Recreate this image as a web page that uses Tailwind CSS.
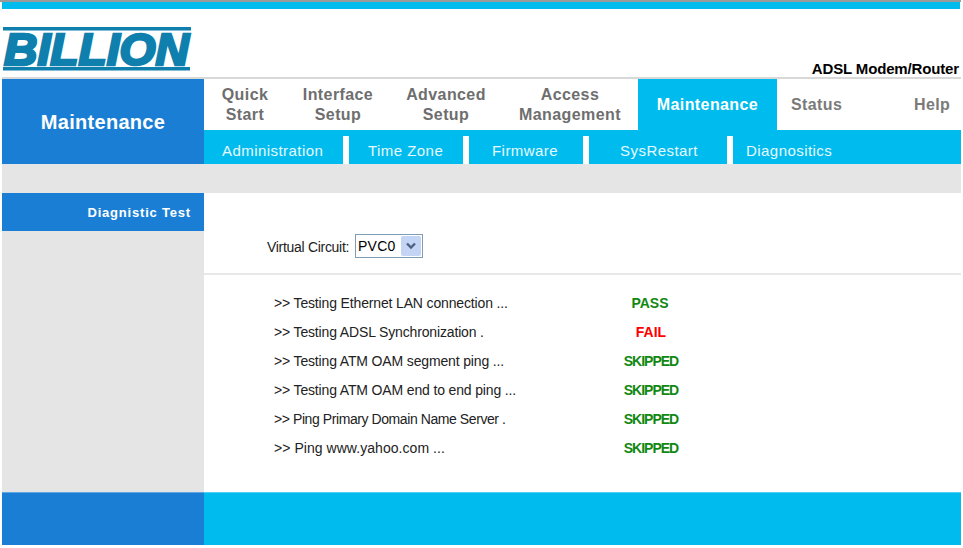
<!DOCTYPE html>
<html lang="en">
<head>
    <meta charset="UTF-8">
    <title>ADSL Modem/Router</title>
    <script src="https://cdn.jsdelivr.net/npm/@tailwindcss/browser@4"></script>
</head>
<body class="bg-white overflow-hidden font-['Liberation_Sans',Arial,sans-serif]">
    <div class="w-[963px] h-[548px] flex flex-col">
        <div class="h-[2px] mr-[2px] bg-[#9a9a9a]"></div>
        <div class="h-[7px] ml-[2px] mr-[3px] bg-[#00bbed]"></div>

        <!-- Logo row -->
        <div class="h-[70px] flex justify-between items-end border-b-2 border-[#d8d8d8] ml-[2px] mr-[2px]">
            <svg width="190" height="52" viewBox="0 0 190 52" class="mb-[1px]">
                <rect x="1" y="3" width="188" height="3.5" fill="#0f7fae"/>
                <rect x="1" y="43" width="187" height="3.5" fill="#0f7fae"/>
                <text x="2" y="41" textLength="185" lengthAdjust="spacingAndGlyphs" font-family="Liberation Sans" font-weight="700" font-style="italic" font-size="44" stroke="#0f7fae" stroke-width="2.6" fill="#0f7fae">BILLION</text>
            </svg>
            <span class="text-[15px] font-bold text-black leading-none mb-[1px] mr-[2px] tracking-[-0.15px]">ADSL Modem/Router</span>
        </div>

        <!-- Header -->
        <div class="flex h-[85px] ml-[2px] mr-[2px]">
            <div class="w-[202px] bg-[#1a7fd4] flex items-center justify-center text-white text-[20px] font-bold tracking-[0.3px]">Maintenance</div>
            <div class="flex-1 flex flex-col">
                <nav class="h-[51px] flex text-[16px] font-bold text-[#6e6e6e] leading-[20px] tracking-[0.4px] text-center">
                    <a class="w-[82px] pt-[6px]">Quick<br>Start</a>
                    <a class="w-[104px] pt-[6px]">Interface<br>Setup</a>
                    <a class="w-[112px] pt-[6px]">Advanced<br>Setup</a>
                    <a class="w-[136px] pt-[6px]">Access<br>Management</a>
                    <a class="w-[139px] bg-[#00bbed] text-white flex items-center justify-center pt-[1px]">Maintenance</a>
                    <a class="w-[137px] pl-[14px] text-left flex items-center pt-[1px] text-[#7a7a7a]">Status</a>
                    <a class="flex items-center pt-[1px] text-[#7a7a7a]">Help</a>
                </nav>
                <div class="h-[34px] bg-[#00bbed] flex items-end text-[15px] text-white/90 tracking-[0.45px] leading-[30px]">
                    <a class="w-[145px] h-[28px] pl-[18px] border-r-6 border-white">Administration</a>
                    <a class="w-[120px] h-[28px] pl-[19px] border-r-6 border-white">Time Zone</a>
                    <a class="w-[120px] h-[28px] pl-[23px] border-r-6 border-white">Firmware</a>
                    <a class="w-[144px] h-[28px] pl-[2px] text-center border-r-6 border-white">SysRestart</a>
                    <a class="pl-[13px] h-[28px]">Diagnositics</a>
                </div>
            </div>
        </div>

        <div class="h-[29px] ml-[2px] mr-[2px] bg-[#e5e5e5]"></div>

        <!-- Body -->
        <div class="flex h-[299px] ml-[2px] mr-[2px]">
            <aside class="w-[202px] bg-[#e5e5e5]">
                <div class="h-[38px] bg-[#1a7fd4] text-white text-[13px] font-bold tracking-[0.8px] text-right pr-[13px] pt-[11px] leading-[17px]">Diagnistic Test</div>
            </aside>
            <main class="flex-1">
                <div class="h-[82px] border-b-2 border-[#e8e8e8] pl-[63px] pt-[41px] flex items-start gap-[6px] text-[14px] text-[#222]">
                    <span class="mt-[4px] leading-[18px] tracking-[-0.3px]">Virtual Circuit:</span>
                    <div class="w-[68px] h-[24px] border border-[#7f9db9] bg-white flex items-center pl-[2px] pr-[1px] justify-between">
                        <span class="tracking-[0.2px] text-black">PVC0</span>
                        <span class="w-[20px] h-[20px] bg-[#c3d4f4] rounded-[2px] flex items-center justify-center">
                            <svg width="12" height="8" viewBox="0 0 12 8"><path d="M2 1.5 L6 5.5 L10 1.5" fill="none" stroke="#4d6185" stroke-width="2.4"/></svg>
                        </span>
                    </div>
                </div>
                <div class="pt-[14px] pl-[70px] text-[14px] text-[#222] leading-[29px] tracking-[-0.15px]">
                    <div class="flex"><span class="w-[310px]">&gt;&gt; Testing Ethernet LAN connection ...</span><b class="w-[132px] text-center text-[#118811] tracking-normal">PASS</b></div>
                    <div class="flex"><span class="w-[310px]">&gt;&gt; Testing ADSL Synchronization .</span><b class="w-[134px] text-center text-[#ff0000] tracking-normal">FAIL</b></div>
                    <div class="flex"><span class="w-[310px]">&gt;&gt; Testing ATM OAM segment ping ...</span><b class="w-[134px] text-center text-[#118811] tracking-[-1px]">SKIPPED</b></div>
                    <div class="flex"><span class="w-[310px]">&gt;&gt; Testing ATM OAM end to end ping ...</span><b class="w-[134px] text-center text-[#118811] tracking-[-1px]">SKIPPED</b></div>
                    <div class="flex"><span class="w-[310px] tracking-[-0.42px]">&gt;&gt; Ping Primary Domain Name Server .</span><b class="w-[134px] text-center text-[#118811] tracking-[-1px]">SKIPPED</b></div>
                    <div class="flex"><span class="w-[310px] tracking-[0.05px]">&gt;&gt; Ping www.yahoo.com ...</span><b class="w-[134px] text-center text-[#118811] tracking-[-1px]">SKIPPED</b></div>
                </div>
            </main>
        </div>

        <!-- Footer -->
        <div class="flex h-[53px] ml-[2px] mr-[2px]">
            <div class="w-[202px] bg-[#1a7fd4] border-t border-[#5fa6e3]"></div>
            <div class="flex-1 bg-[#00bbed] border-t border-[#4fd0f2]"></div>
        </div>
    </div>
</body>
</html>
